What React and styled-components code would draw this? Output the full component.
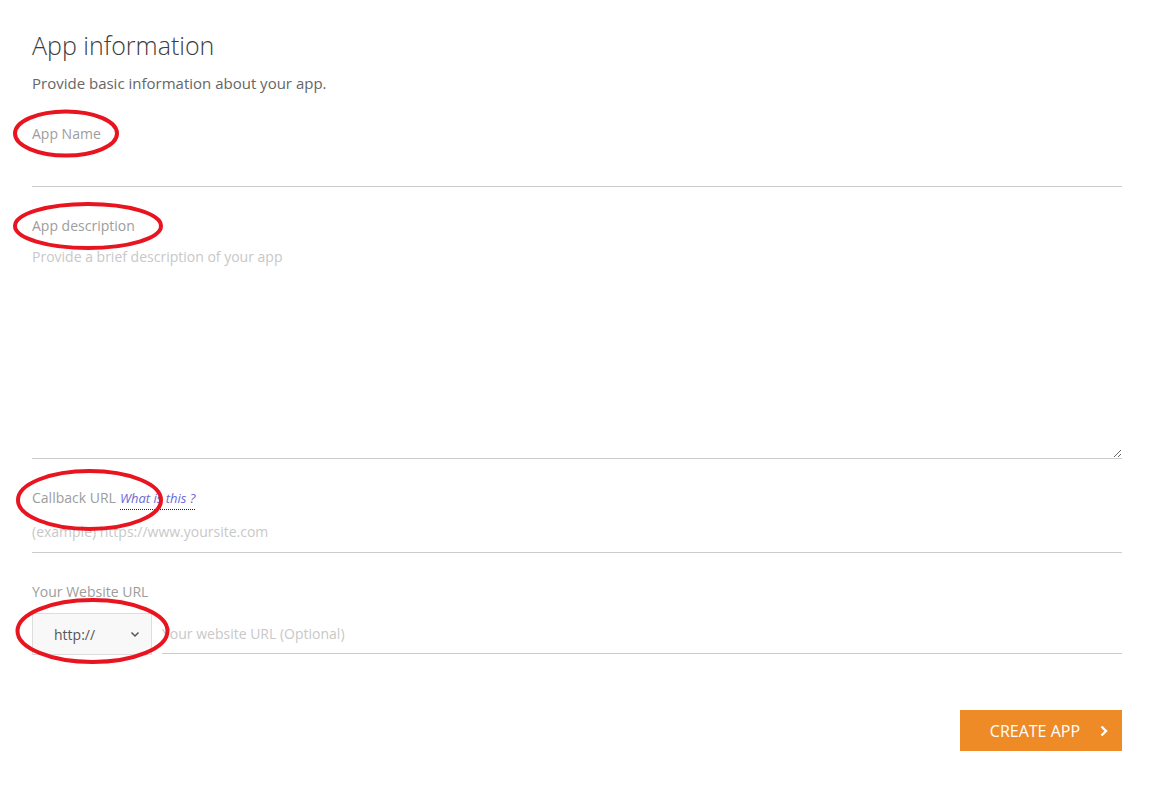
import React from 'react';
import styled, { createGlobalStyle } from 'styled-components';

const GlobalStyle = createGlobalStyle`
    body {
        margin: 0;
        background: #ffffff;
        font-family: "Open Sans", "Liberation Sans", sans-serif;
    }
`;

const Page = styled.div`
    position: relative;
    width: 1176px;
    min-height: 792px;
    box-sizing: border-box;
    padding: 29px 54px 0 32px;
`;

const Title = styled.h2`
    margin: 0;
    font-size: 25px;
    line-height: 32px;
    font-weight: 300;
    color: #3c3c3c;
`;

const Intro = styled.p`
    margin: 12px 0 0;
    font-size: 15px;
    line-height: 20px;
    color: #666666;
`;

const Field = styled.div`
    display: flex;
    flex-direction: column;
    margin-top: ${props => props.gap || 29}px;
`;

const Label = styled.label`
    font-size: 14px;
    line-height: 20px;
    color: #9d9d9d;
`;

const HelpLink = styled.a`
    margin-left: 4px;
    font-size: 13px;
    font-style: italic;
    color: #6c6ad6;
    text-decoration: none;
    border-bottom: 1px dotted #222;
    padding-bottom: 2px;
`;

const TextInput = styled.input`
    box-sizing: border-box;
    width: 100%;
    height: ${props => props.pt + props.pb + 21}px;
    padding: ${props => props.pt}px 0 ${props => props.pb}px;
    border: none;
    border-bottom: 1px solid #cccccc;
    outline: none;
    font-family: inherit;
    font-size: 14px;
    line-height: 20px;
    color: #3c3c3c;
    background: transparent;

    &::placeholder {
        color: #c8c8c8;
    }
`;

const TextArea = styled.textarea`
    box-sizing: border-box;
    width: 100%;
    height: 223px;
    padding: 11px 0 0;
    border: none;
    border-bottom: 1px solid #cccccc;
    outline: none;
    resize: vertical;
    font-family: inherit;
    font-size: 14px;
    line-height: 20px;
    color: #3c3c3c;

    &::placeholder {
        color: #c8c8c8;
    }
`;

const UrlRow = styled.div`
    display: flex;
    align-items: flex-start;
    gap: 10px;
    margin-top: 11px;
`;

const Select = styled.div`
    box-sizing: border-box;
    width: 120px;
    height: 42px;
    flex: none;
    display: flex;
    align-items: center;
    justify-content: space-between;
    padding: 0 11px 0 21px;
    background: #f8f8f8;
    border: 1px solid #dddddd;
    font-size: 14px;
    color: #555555;
`;

const Actions = styled.div`
    display: flex;
    justify-content: flex-end;
    margin-top: 55px;
`;

const CreateButton = styled.button`
    display: flex;
    align-items: center;
    gap: 20px;
    height: 41px;
    padding: 0 14px 0 30px;
    border: none;
    background: #ee8b26;
    color: #ffffff;
    font-family: inherit;
    font-size: 16px;
    cursor: pointer;
`;

const Marks = styled.svg`
    position: absolute;
    top: 0;
    left: 0;
    pointer-events: none;
`;

const ChevronDown = () => (
    <svg width="10" height="7" viewBox="0 0 10 7" fill="none">
        <polyline points="1.5,1.5 5,5 8.5,1.5" stroke="#555" strokeWidth="1.5" />
    </svg>
);

const ChevronRight = () => (
    <svg width="8" height="12" viewBox="0 0 8 12" fill="none">
        <polyline points="1.5,1.5 6,6 1.5,10.5" stroke="#fff" strokeWidth="2.4" />
    </svg>
);

const App = () => {
    return (
        <Page>
            <GlobalStyle />
            <Title>App information</Title>
            <Intro>Provide basic information about your app.</Intro>

            <Field gap={31}>
                <Label>App Name</Label>
                <TextInput pt={11} pb={11} />
            </Field>

            <Field>
                <Label>App description</Label>
                <TextArea placeholder="Provide a brief description of your app" />
            </Field>

            <Field>
                <Label>
                    Callback URL<HelpLink href="#">What is this ?</HelpLink>
                </Label>
                <TextInput pt={13} pb={11} placeholder="(example) https://www.yoursite.com" />
            </Field>

            <Field>
                <Label>Your Website URL</Label>
                <UrlRow>
                    <Select>
                        <span>http://</span>
                        <ChevronDown />
                    </Select>
                    <TextInput pt={10} pb={10} placeholder="Your website URL (Optional)" />
                </UrlRow>
            </Field>

            <Actions>
                <CreateButton>
                    CREATE APP
                    <ChevronRight />
                </CreateButton>
            </Actions>

            <Marks width="1176" height="792" viewBox="0 0 1176 792">
                <g fill="none" stroke="#e8141f" strokeWidth="4">
                    <ellipse cx="66" cy="133.5" rx="51" ry="22" />
                    <ellipse cx="88" cy="226" rx="73" ry="22" />
                    <ellipse cx="89.5" cy="500" rx="71.5" ry="29" />
                    <ellipse cx="92.5" cy="631" rx="75" ry="31" />
                </g>
            </Marks>
        </Page>
    );
};

export default App;
